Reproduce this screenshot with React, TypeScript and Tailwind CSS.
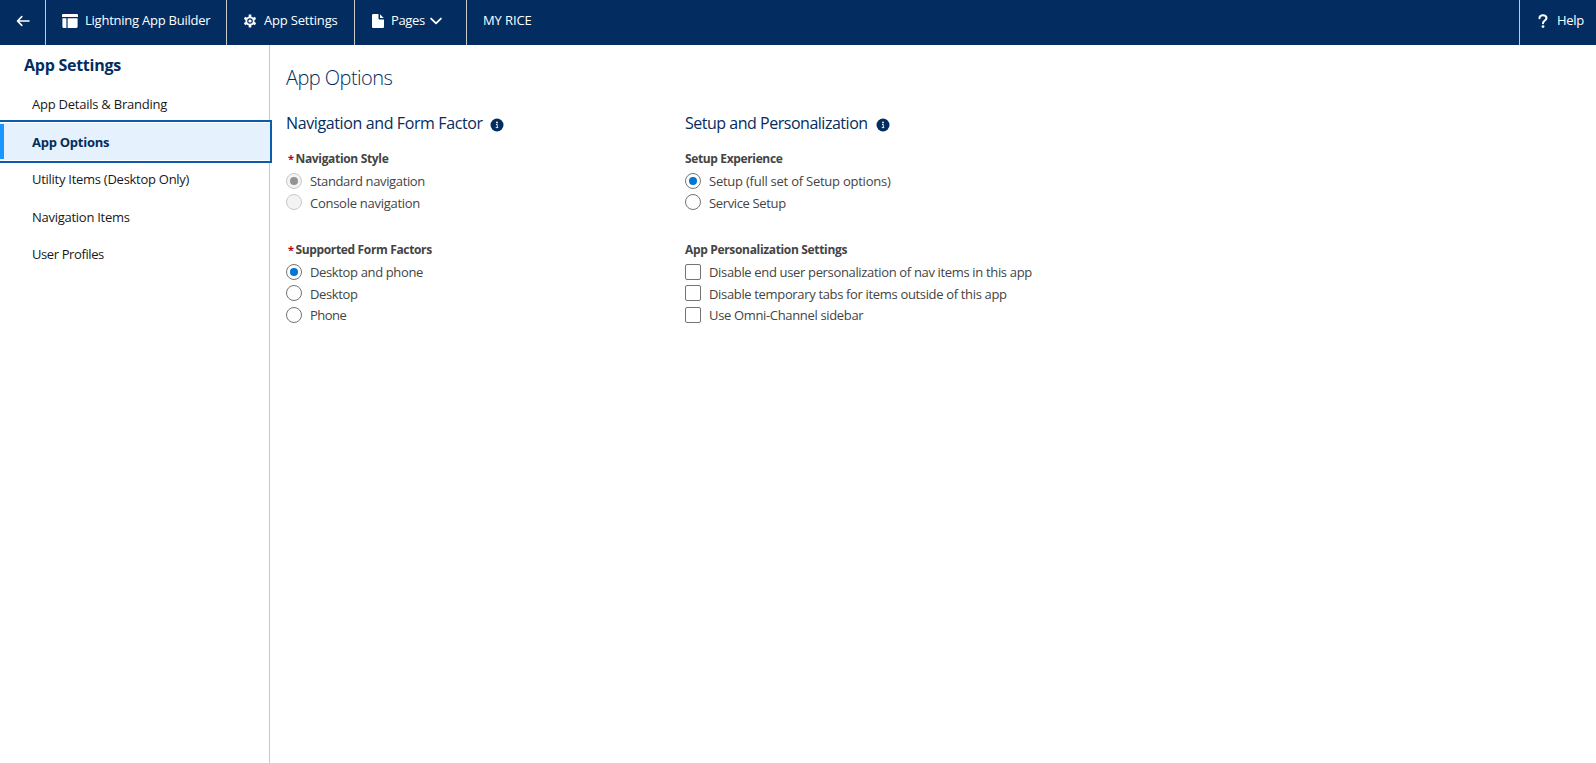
import type { ReactNode } from 'react';

function Tab({ width, children }: { width: string; children: ReactNode }) {
  return <div className={`flex h-[45px] shrink-0 items-center border-r border-[#c9c9c9] pb-[4px] ${width}`}>{children}</div>;
}

function InfoIcon() {
  return (
    <svg className="block h-[14px] w-[14px] shrink-0" viewBox="0 0 14 14">
      <circle cx="7" cy="7" r="6.5" fill="#032d60" />
      <circle cx="7" cy="4.5" r="0.9" fill="#fff" />
      <path d="M6 6.5h1.3v3M5.7 9.6h2.6" stroke="#fff" strokeWidth="0.9" fill="none" />
    </svg>
  );
}

function Radio({ checked, disabled }: { checked?: boolean; disabled?: boolean }) {
  return (
    <span className={`flex size-[16px] shrink-0 items-center justify-center rounded-full border ${disabled ? 'border-[#c9c9c9] bg-[#f3f3f3]' : 'border-[#747474] bg-white'}`}>
      {checked && <span className={`size-[8px] rounded-full ${disabled ? 'bg-[#939393]' : 'bg-[#0176d3]'}`} />}
    </span>
  );
}

function Option({ label, tracking, height, leading, checked, disabled, box }: { label: string; tracking: string; height: string; leading: string; checked?: boolean; disabled?: boolean; box?: boolean }) {
  return (
    <div className={`flex items-start ${height}`}>
      {box ? <span className="size-[16px] shrink-0 rounded-[2px] border border-[#747474] bg-white" /> : <Radio checked={checked} disabled={disabled} />}
      <span className={`ml-[8px] whitespace-nowrap text-[13px] text-[#444444] ${leading} ${tracking}`}>{label}</span>
    </div>
  );
}

function GroupLabel({ text, tracking, required }: { text: string; tracking: string; required?: boolean }) {
  return (
    <div className="flex h-[23px] items-start text-[12px] leading-[18px]">
      {required && <span className="ml-[2px] w-[7.5px] text-[11px] font-bold text-[#ba0517]">*</span>}
      <span className={`whitespace-nowrap font-bold text-[#444444] ${tracking}`}>{text}</span>
    </div>
  );
}

const items = [
  { label: 'App Details & Branding', tracking: 'tracking-[-0.24px]', height: 'h-[37px]' },
  { label: 'App Options', tracking: 'tracking-[-0.26px]', height: 'h-[43px]', active: true },
  { label: 'Utility Items (Desktop Only)', tracking: 'tracking-[-0.27px]', height: 'h-[37px]' },
  { label: 'Navigation Items', tracking: 'tracking-[-0.27px]', height: 'h-[39px]' },
  { label: 'User Profiles', tracking: 'tracking-[-0.4px]', height: 'h-[36px]' },
];

export default function App() {
  return (
    <div className="flex h-[763px] w-[1596px] flex-col overflow-hidden bg-white font-['Open_Sans','Noto_Sans',sans-serif]">
      <header className="flex h-[45px] shrink-0 bg-[#032d60] text-[13px] leading-[18px] text-white">
        <Tab width="w-[46px]">
          <svg className="ml-[16px] h-[14px] w-[15px]" viewBox="0 0 15 14" fill="none" stroke="#fff" strokeWidth="1.6" strokeLinecap="round" strokeLinejoin="round">
            <path d="M13 7H1.8M5.8 2.6 1.5 7 5.8 11.4" />
          </svg>
        </Tab>
        <Tab width="w-[181px]">
          <svg className="ml-[16px] h-[14px] w-[16px]" viewBox="0 0 16 14" fill="#fff">
            <path d="M1.2 0h13.6c.7 0 1.2.5 1.2 1.2V3H0V1.2C0 .5.5 0 1.2 0ZM.4 4.3h4V14H1.6C.9 14 .4 13.5.4 12.8ZM5.6 4.3h10V12.8c0 .7-.5 1.2-1.2 1.2H5.6Z" />
          </svg>
          <span className="ml-[7px] mb-[2px] whitespace-nowrap tracking-[-0.24px]">Lightning App Builder</span>
        </Tab>
        <Tab width="w-[128px]">
          <svg className="ml-[16px] h-[14px] w-[14px]" viewBox="0 0 14 14">
            <circle cx="7" cy="7" r="4.6" fill="#fff" />
            <path d="M7 .6V13.4M1.5 3.8 12.5 10.2M1.5 10.2 12.5 3.8" stroke="#fff" strokeWidth="2.6" />
            <circle cx="7" cy="7" r="2.2" fill="#fff" stroke="#032d60" strokeWidth="1.2" />
          </svg>
          <span className="ml-[7px] mb-[2px] whitespace-nowrap tracking-[-0.18px]">App Settings</span>
        </Tab>
        <Tab width="w-[112px]">
          <svg className="ml-[17px] h-[14px] w-[12px]" viewBox="0 0 12 14" fill="#fff">
            <path d="M1.3 0H6.5V4.5C6.5 5.1 6.9 5.5 7.5 5.5H12V12.7C12 13.4 11.4 14 10.7 14H1.3C.6 14 0 13.4 0 12.7V1.3C0 .6.6 0 1.3 0ZM8 .3 11.7 4H8Z" />
          </svg>
          <span className="ml-[7px] mb-[2px] whitespace-nowrap tracking-[-0.35px]">Pages</span>
          <svg className="ml-[5px] h-[8px] w-[12px]" viewBox="0 0 13 8" fill="none" stroke="#fff" strokeWidth="1.9" strokeLinecap="round" strokeLinejoin="round">
            <path d="M1.2 1.3 6.5 6.5 11.8 1.3" />
          </svg>
        </Tab>
        <div className="flex h-[45px] flex-1 items-center pb-[6px] pl-[16px] tracking-[-0.1px]">MY RICE</div>
        <div className="flex h-[45px] w-[77px] items-center border-l border-[#c9c9c9] pb-[4px]">
          <svg className="ml-[18px] h-[14px] w-[10px]" viewBox="0 0 10 14" fill="none" stroke="#fff" strokeWidth="2.1">
            <path d="M1.5 4.3C1.5 2.3 2.9 1.2 5 1.2S8.5 2.3 8.5 4C8.5 6.6 5 6.400 5 9.200" strokeLinecap="round" />
            <circle cx="5" cy="12.6" r="1.4" fill="#fff" stroke="none" />
          </svg>
          <span className="ml-[9px] mb-[2px] tracking-[-0.3px]">Help</span>
        </div>
      </header>
      <div className="flex flex-1">
        <nav className="flex w-[270px] shrink-0 flex-col border-r border-[#c9c9c9]">
          <h2 className="mt-[8px] h-[33px] pl-[24px] text-[16px] font-bold leading-[24px] tracking-[-0.26px] text-[#032d60]">App Settings</h2>
          {items.map((item) =>
            item.active ? (
              <div key={item.label} className={`relative z-10 mt-[-3px] mb-[-2px] flex w-[272px] shrink-0 items-center border-y-2 border-r-2 border-[#0b5cab] bg-white py-px ${item.height}`}>
                <div className="flex h-full flex-1 items-center bg-[#e5f2fd]">
                  <span className="h-[35px] w-[4px] bg-[#1b96ff]" />
                  <span className={`ml-[28px] pt-[2px] text-[13px] font-bold text-[#032d60] ${item.tracking}`}>{item.label}</span>
                </div>
              </div>
            ) : (
              <div key={item.label} className={`flex shrink-0 items-center pl-[32px] text-[13px] text-[#181818] ${item.height} ${item.tracking}`}>{item.label}</div>
            ),
          )}
        </nav>
        <main className="flex flex-1 flex-col pl-[16px]">
          <h1 className="mt-[19px] h-[47px] text-[20px] font-light leading-[28px] tracking-[-0.54px] text-[#032d60]">App Options</h1>
          <div className="flex">
            <section className="w-[399px]">
              <div className="flex h-[39px] items-start text-[16px] leading-[24px] text-[#032d60]">
                <span className="whitespace-nowrap tracking-[-0.38px]">Navigation and Form Factor</span>
                <span className="ml-[7px] mt-[7px]"><InfoIcon /></span>
              </div>
              <GroupLabel required text="Navigation Style" tracking="tracking-[-0.33px]" />
              <Option label="Standard navigation" tracking="tracking-[-0.36px]" leading="leading-[16px]" height="h-[21px]" checked disabled />
              <Option label="Console navigation" tracking="tracking-[-0.27px]" leading="leading-[18px]" height="h-[47px]" disabled />
              <GroupLabel required text="Supported Form Factors" tracking="tracking-[-0.35px]" />
              <Option label="Desktop and phone" tracking="tracking-[-0.36px]" leading="leading-[16px]" height="h-[21px]" checked />
              <Option label="Desktop" tracking="tracking-[-0.36px]" leading="leading-[18px]" height="h-[22px]" />
              <Option label="Phone" tracking="tracking-[-0.5px]" leading="leading-[16px]" height="h-[22px]" />
            </section>
            <section className="w-[500px]">
              <div className="flex h-[39px] items-start text-[16px] leading-[24px] text-[#032d60]">
                <span className="whitespace-nowrap tracking-[-0.48px]">Setup and Personalization</span>
                <span className="ml-[8px] mt-[7px]"><InfoIcon /></span>
              </div>
              <GroupLabel text="Setup Experience" tracking="tracking-[-0.36px]" />
              <Option label="Setup (full set of Setup options)" tracking="tracking-[-0.24px]" leading="leading-[16px]" height="h-[21px]" checked />
              <Option label="Service Setup" tracking="tracking-[-0.36px]" leading="leading-[18px]" height="h-[47px]" />
              <GroupLabel text="App Personalization Settings" tracking="tracking-[-0.33px]" />
              <Option box label="Disable end user personalization of nav items in this app" tracking="tracking-[-0.34px]" leading="leading-[16px]" height="h-[21px]" />
              <Option box label="Disable temporary tabs for items outside of this app" tracking="tracking-[-0.34px]" leading="leading-[18px]" height="h-[22px]" />
              <Option box label="Use Omni-Channel sidebar" tracking="tracking-[-0.34px]" leading="leading-[16px]" height="h-[22px]" />
            </section>
          </div>
        </main>
      </div>
    </div>
  );
}
